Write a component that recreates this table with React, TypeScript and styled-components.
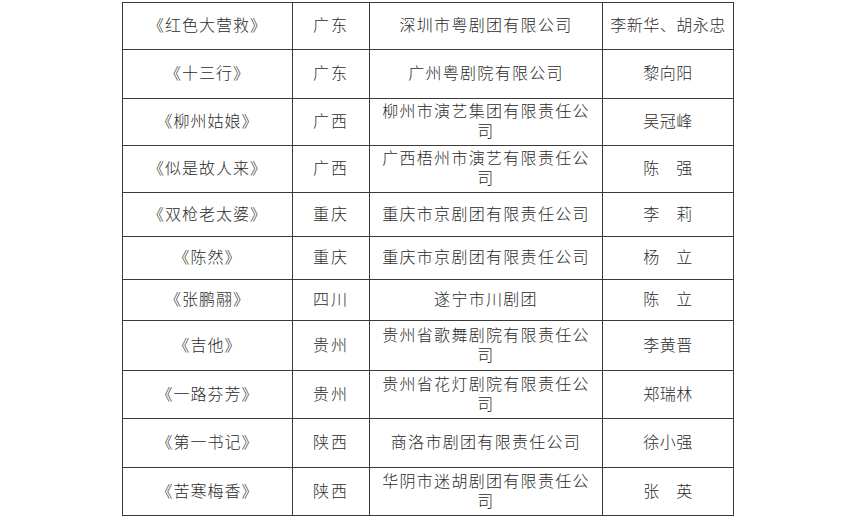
import styled, { createGlobalStyle } from "styled-components";

const GlobalStyle = createGlobalStyle`
    body{
        margin:0;
        background:#ffffff;
        font-family:"Liberation Serif","Noto Sans CJK SC",serif;
        color:#2b2b2b;
    }
`;

const Page = styled.div`
    width:857px;
    height:517px;
    overflow:hidden;
    padding:2px 0 0 122px;
    box-sizing:border-box;
`;

const Table = styled.table`
    border-collapse:collapse;
    table-layout:fixed;
    width:612px;
`;

const Col = styled.col<{ $w: number }>`
    width:${(p) => p.$w}px;
`;

const Row = styled.tr<{ $h: number }>`
    height:${(p) => p.$h}px;
`;

const Cell = styled.td<{ $spacing?: number }>`
    border:1px solid #3a3a3a;
    padding:0 6px;
    text-align:center;
    vertical-align:middle;
    font-size:16px;
    line-height:20px;
    letter-spacing:${(p) => p.$spacing ?? 0}px;
    font-weight:300;
`;

interface Play {
    title: string;
    province: string;
    company: string;
    author: string;
    h: number;
}

const plays: Play[] = [
    { title: "《红色大营救》", province: "广东", company: "深圳市粤剧团有限公司", author: "李新华、胡永忠", h: 47 },
    { title: "《十三行》", province: "广东", company: "广州粤剧院有限公司", author: "黎向阳", h: 49 },
    { title: "《柳州姑娘》", province: "广西", company: "柳州市演艺集团有限责任公司", author: "吴冠峰", h: 47 },
    { title: "《似是故人来》", province: "广西", company: "广西梧州市演艺有限责任公司", author: "陈　强", h: 47 },
    { title: "《双枪老太婆》", province: "重庆", company: "重庆市京剧团有限责任公司", author: "李　莉", h: 44 },
    { title: "《陈然》", province: "重庆", company: "重庆市京剧团有限责任公司", author: "杨　立", h: 43 },
    { title: "《张鹏翮》", province: "四川", company: "遂宁市川剧团", author: "陈　立", h: 41 },
    { title: "《吉他》", province: "贵州", company: "贵州省歌舞剧院有限责任公司", author: "李黄晋", h: 50 },
    { title: "《一路芬芳》", province: "贵州", company: "贵州省花灯剧院有限责任公司", author: "郑瑞林", h: 48 },
    { title: "《第一书记》", province: "陕西", company: "商洛市剧团有限责任公司", author: "徐小强", h: 49 },
    { title: "《苦寒梅香》", province: "陕西", company: "华阴市迷胡剧团有限责任公司", author: "张　英", h: 48 },
];

function App() {
    return (
        <Page>
            <GlobalStyle />
            <Table>
                <colgroup>
                    <Col $w={170} />
                    <Col $w={77} />
                    <Col $w={233} />
                    <Col $w={131} />
                </colgroup>
                <tbody>
                    {plays.map((p) => (
                        <Row key={p.title} $h={p.h}>
                            <Cell $spacing={1}>{p.title}</Cell>
                            <Cell $spacing={2}>{p.province}</Cell>
                            <Cell $spacing={1.3}>{p.company}</Cell>
                            <Cell $spacing={0.5}>{p.author}</Cell>
                        </Row>
                    ))}
                </tbody>
            </Table>
        </Page>
    );
}

export default App;
